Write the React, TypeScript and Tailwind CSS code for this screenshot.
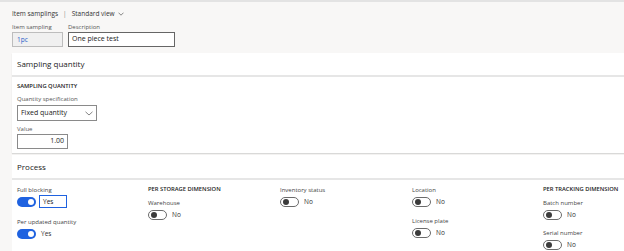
import React from "react";

const font = { fontFamily: '"Open Sans", "Noto Sans", sans-serif' };

// petit interrupteur façon Fluent
const Toggle = ({ on }: { on: boolean }) =>
  on ? (
    <div className="flex h-[10px] w-[19px] items-center justify-end rounded-full bg-[#1f62e0] pr-[2px]">
      <div className="h-[6px] w-[6px] rounded-full bg-white" />
    </div>
  ) : (
    <div className="flex h-[10px] w-[19px] items-center rounded-full border border-[#6b6b6b] bg-white pl-[2px]">
      <div className="h-[6px] w-[6px] rounded-full bg-[#3b3b3b]" />
    </div>
  );

const Field = ({
  label,
  on,
  boxed,
}: {
  label: string;
  on: boolean;
  boxed?: boolean;
}) => (
  <div className="flex flex-col">
    <span className="whitespace-nowrap text-[6px] leading-[9px] text-[#444]">{label}</span>
    <div className="flex h-[13px] items-center gap-[5px]">
      <Toggle on={on} />
      {boxed ? (
        <div className="-ml-[2px] flex h-[13px] w-[28px] items-center border border-[#1f62e0] pl-[3px] text-[6.5px] text-[#222]">
          Yes
        </div>
      ) : (
        <span className="text-[6.5px] text-[#333]">{on ? "Yes" : "No"}</span>
      )}
    </div>
  </div>
);

const GroupTitle = ({ children }: { children: React.ReactNode }) => (
  <span className="whitespace-nowrap text-[5.8px] font-semibold leading-[9px] text-[#222]">
    {children}
  </span>
);

export default function App() {
  return (
    <div
      style={font}
      className="h-[251px] w-[624px] overflow-hidden border-t-2 border-[#e3e3e3] bg-[#f8f7f6]"
    >
      {/* En-tête */}
      <div className="px-3 pt-[7px]">
        <div className="flex items-center gap-[5px] text-[6.5px] leading-[10px] text-[#333]">
          <span>Item samplings</span>
          <span className="text-[#888]">|</span>
          <span>Standard view</span>
          <svg width="6" height="4" viewBox="0 0 6 4" className="-ml-[2px]">
            <path d="M0.5 0.7 L3 3.2 L5.5 0.7" fill="none" stroke="#555" strokeWidth="0.7" />
          </svg>
        </div>
        <div className="mt-[4px] flex gap-[5px]">
          <div className="flex flex-col">
            <span className="text-[6px] leading-[9px] text-[#555]">Item sampling</span>
            <div className="flex h-[15px] w-[51px] items-center border border-[#bdbdbd] bg-[#f0f0f0] pl-[4px] text-[6.5px] text-[#2a62c9]">
              1pc
            </div>
          </div>
          <div className="flex flex-col">
            <span className="text-[6px] leading-[9px] text-[#555]">Description</span>
            <div className="flex h-[15px] w-[107px] items-center border border-[#666] bg-white pl-[3px] text-[7px] text-[#222]">
              One piece test
            </div>
          </div>
        </div>
      </div>

      {/* Carte Sampling quantity */}
      <div className="ml-3 mt-[6px] bg-white shadow-[0_1px_1px_rgba(0,0,0,0.12)]">
        <div className="flex h-[24px] items-center border-b-2 border-[#e6e6e6] pl-[5px] text-[8px] text-[#222]">
          Sampling quantity
        </div>
        <div className="flex flex-col px-[5px] pb-[4px] pt-[5px]">
          <GroupTitle>SAMPLING QUANTITY</GroupTitle>
          <span className="mt-[4px] text-[6px] leading-[9px] text-[#555]">
            Quantity specification
          </span>
          <div className="mt-[1px] flex h-[16px] w-[80px] items-center justify-between border border-[#8a8a8a] px-[3px] text-[7px] text-[#222]">
            <span>Fixed quantity</span>
            <svg width="8" height="5" viewBox="0 0 8 5">
              <path d="M0.5 0.8 L4 4 L7.5 0.8" fill="none" stroke="#666" strokeWidth="0.8" />
            </svg>
          </div>
          <span className="mt-[4px] text-[6px] leading-[9px] text-[#555]">Value</span>
          <div className="flex h-[15px] w-[51px] items-center justify-end border border-[#8a8a8a] pr-[3px] text-[7px] text-[#222]">
            1.00
          </div>
        </div>
      </div>

      {/* Carte Process */}
      <div className="ml-3 mt-[2px] h-[100px] bg-white">
        <div className="flex h-[25px] items-center border-b-2 border-[#e6e6e6] pl-[5px] text-[8px] text-[#222]">
          Process
        </div>
        <div className="grid grid-cols-[131px_132px_132px_131px_1fr] px-[5px] pt-[5px]">
          <div className="flex flex-col gap-[10px] pt-[1px]">
            <Field label="Full blocking" on boxed />
            <Field label="Per updated quantity" on />
          </div>
          <div className="flex flex-col">
            <GroupTitle>PER STORAGE DIMENSION</GroupTitle>
            <div className="mt-[5px]">
              <Field label="Warehouse" on={false} />
            </div>
          </div>
          <div className="flex flex-col pt-[1px]">
            <Field label="Inventory status" on={false} />
          </div>
          <div className="flex flex-col gap-[9px] pt-[1px]">
            <Field label="Location" on={false} />
            <Field label="License plate" on={false} />
          </div>
          <div className="flex flex-col">
            <GroupTitle>PER TRACKING DIMENSION</GroupTitle>
            <div className="mt-[5px] flex flex-col gap-[8px]">
              <Field label="Batch number" on={false} />
              <Field label="Serial number" on={false} />
            </div>
          </div>
        </div>
      </div>
    </div>
  );
}
